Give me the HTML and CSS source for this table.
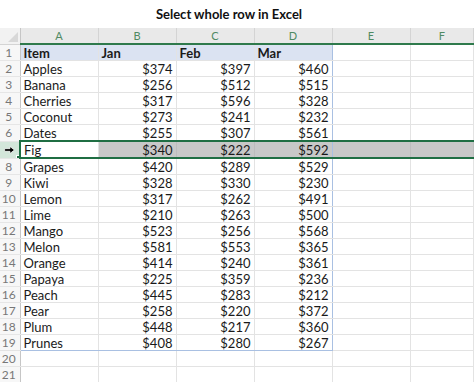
FILE: index.html
```html
<!DOCTYPE html>
<html>
<head>
    <title>Select whole row in Excel</title>
    <link rel="stylesheet" href="styles.css">
</head>
<body>
    <h1>Select whole row in Excel</h1>

    <table class="sheet">
        <colgroup>
            <col class="c-num">
            <col class="c-cell">
            <col class="c-cell">
            <col class="c-cell">
            <col class="c-cell">
            <col class="c-cell">
            <col>
        </colgroup>
        <thead>
            <tr>
                <th class="corner"><span class="tri"></span></th>
                <th>A</th>
                <th>B</th>
                <th>C</th>
                <th>D</th>
                <th>E</th>
                <th>F</th>
            </tr>
        </thead>
        <tbody>
            <tr class="head">
                <td class="num">1</td>
                <td>Item</td>
                <td>Jan</td>
                <td>Feb</td>
                <td class="last">Mar</td>
                <td></td>
                <td></td>
            </tr>
            <tr><td class="num">2</td><td>Apples</td><td class="amt">$374</td><td class="amt">$397</td><td class="amt last">$460</td><td></td><td></td></tr>
            <tr><td class="num">3</td><td>Banana</td><td class="amt">$256</td><td class="amt">$512</td><td class="amt last">$515</td><td></td><td></td></tr>
            <tr><td class="num">4</td><td>Cherries</td><td class="amt">$317</td><td class="amt">$596</td><td class="amt last">$328</td><td></td><td></td></tr>
            <tr><td class="num">5</td><td>Coconut</td><td class="amt">$273</td><td class="amt">$241</td><td class="amt last">$232</td><td></td><td></td></tr>
            <tr><td class="num">6</td><td>Dates</td><td class="amt">$255</td><td class="amt">$307</td><td class="amt last">$561</td><td></td><td></td></tr>
            <tr class="sel">
                <td class="num">
                    <svg class="cursor" width="11" height="8" viewBox="0 0 12 9">
                        <path d="M0.5 3 H6.5 V0.5 L11.5 4.5 L6.5 8.5 V6 H0.5 Z" fill="#000" stroke="#fff" stroke-width="0.8"/>
                    </svg>
                    <span class="handle"></span>
                </td>
                <td class="active">Fig</td>
                <td class="amt">$340</td>
                <td class="amt">$222</td>
                <td class="amt last">$592</td>
                <td></td>
                <td></td>
            </tr>
            <tr><td class="num">8</td><td>Grapes</td><td class="amt">$420</td><td class="amt">$289</td><td class="amt last">$529</td><td></td><td></td></tr>
            <tr><td class="num">9</td><td>Kiwi</td><td class="amt">$328</td><td class="amt">$330</td><td class="amt last">$230</td><td></td><td></td></tr>
            <tr><td class="num">10</td><td>Lemon</td><td class="amt">$317</td><td class="amt">$262</td><td class="amt last">$491</td><td></td><td></td></tr>
            <tr><td class="num">11</td><td>Lime</td><td class="amt">$210</td><td class="amt">$263</td><td class="amt last">$500</td><td></td><td></td></tr>
            <tr><td class="num">12</td><td>Mango</td><td class="amt">$523</td><td class="amt">$256</td><td class="amt last">$568</td><td></td><td></td></tr>
            <tr><td class="num">13</td><td>Melon</td><td class="amt">$581</td><td class="amt">$553</td><td class="amt last">$365</td><td></td><td></td></tr>
            <tr><td class="num">14</td><td>Orange</td><td class="amt">$414</td><td class="amt">$240</td><td class="amt last">$361</td><td></td><td></td></tr>
            <tr><td class="num">15</td><td>Papaya</td><td class="amt">$225</td><td class="amt">$359</td><td class="amt last">$236</td><td></td><td></td></tr>
            <tr><td class="num">16</td><td>Peach</td><td class="amt">$445</td><td class="amt">$283</td><td class="amt last">$212</td><td></td><td></td></tr>
            <tr><td class="num">17</td><td>Pear</td><td class="amt">$258</td><td class="amt">$220</td><td class="amt last">$372</td><td></td><td></td></tr>
            <tr><td class="num">18</td><td>Plum</td><td class="amt">$448</td><td class="amt">$217</td><td class="amt last">$360</td><td></td><td></td></tr>
            <tr class="end"><td class="num">19</td><td>Prunes</td><td class="amt">$408</td><td class="amt">$280</td><td class="amt last">$267</td><td></td><td></td></tr>
            <tr><td class="num">20</td><td></td><td></td><td></td><td></td><td></td><td></td></tr>
            <tr><td class="num">21</td><td></td><td></td><td></td><td></td><td></td><td></td></tr>
        </tbody>
    </table>
</body>
</html>
```

FILE: styles.css
```css
body {
    margin: 0;
    background: #fff;
    font-family: Lato, "Liberation Sans", sans-serif;
    color: #1a1a1a;
}
h1 {
    margin: 0;
    height: 28px;
    padding: 7px 16px 0 0;
    box-sizing: border-box;
    font-size: 13px;
    line-height: 15px;
    text-align: center;
    color: #111;
}
.sheet {
    width: 474px;
    table-layout: fixed;
    border-collapse: collapse;
    font-size: 13px;
}
.c-num { width: 20px; }
.c-cell { width: 78px; }
.sheet tr { height: 16px; }
.sheet th,
.sheet td {
    padding: 1px 3px 0;
    line-height: 14px;
    white-space: nowrap;
    overflow: hidden;
    border-right: 1px solid #e3e3e3;
    border-bottom: 1px solid #e3e3e3;
}
.sheet th {
    padding: 0 3px;
    background: #e9e9e9;
    color: #4f8a63;
    font-weight: normal;
    font-size: 11px;
    text-align: center;
    border-right: 1px solid #d4d4d4;
    border-bottom: 2px solid #2f7a4c;
}
.sheet th.corner {
    position: relative;
    background: #f2f2f2;
    border-bottom: 1px solid #d4d4d4;
    border-right: 1px solid #c6c6c6;
}
.tri {
    position: absolute;
    right: 2px;
    bottom: 2px;
    width: 0;
    height: 0;
    border-left: 10px solid transparent;
    border-bottom: 10px solid #d8d8d8;
}
.sheet td.num {
    padding: 1px 2px 0 0;
    text-align: center;
    color: #777;
    font-size: 12px;
    background: #f7f7f7;
    border-right: 1px solid #c6c6c6;
    border-bottom: 1px solid #e6e6e6;
}
.amt { text-align: right; }
.last { border-right: 1px solid #a9c0e2 !important; }
.head td { background: #dbe3f2; font-weight: bold; }
.head td.num { background: #f7f7f7; font-weight: normal; }
.head td:nth-child(n+6) { background: #fff; }
.end td { border-bottom: 1px solid #a9c0e2; }
.end td.num,
.end td:nth-child(n+6) { border-bottom-color: #e3e3e3; }

.sel td {
    background: #c8c8c8;
    border-top: 2px solid #1f6e43;
    border-bottom: 2px solid #1f6e43;
    border-right-color: #bdbdbd;
}
.sel td.active {
    background: #fff;
    border-left: 2px solid #1f6e43;
    border-right-color: #e3e3e3;
}
.sel td.num {
    position: relative;
    background: #d3e6da;
    border-top: 1px solid #c6c6c6;
    border-bottom: 1px solid #e6e6e6;
    border-right: 1px solid #2f7a4c;
}
.cursor {
    position: absolute;
    left: 4px;
    top: 4px;
}
.handle {
    position: absolute;
    right: -3px;
    bottom: -3px;
    width: 4px;
    height: 4px;
    background: #1f6e43;
    border: 1px solid #fff;
}
```
